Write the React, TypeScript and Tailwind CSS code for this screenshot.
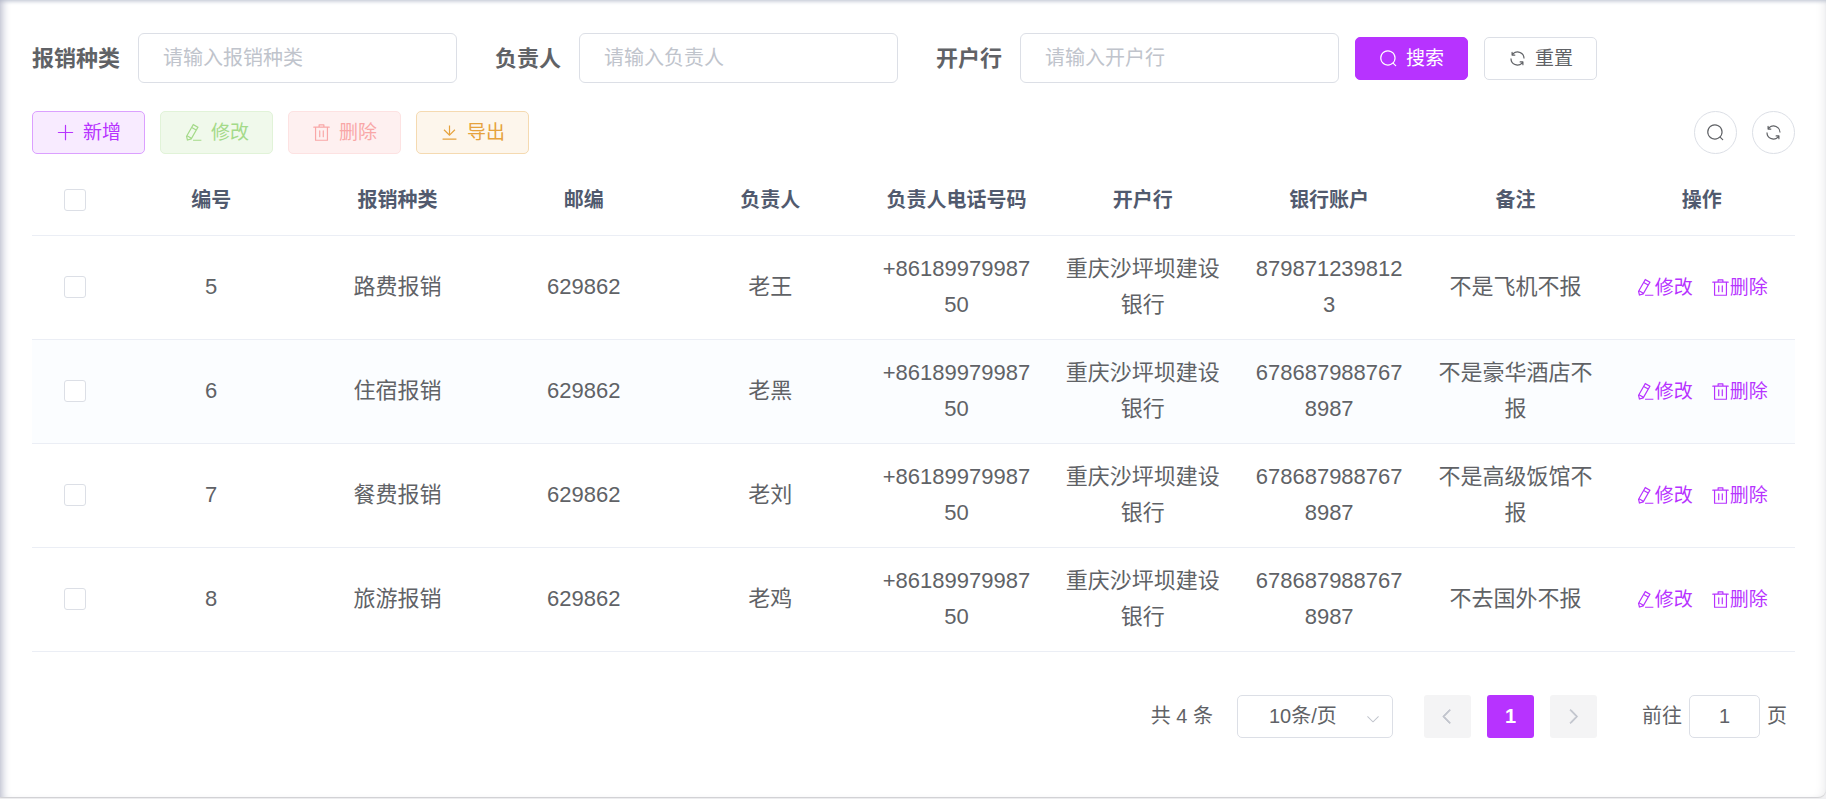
import { useState } from "react";
import type { ReactNode } from "react";

const icons = {
  search:
    "M795.904 750.72l124.992 124.928a32 32 0 0 1-45.248 45.248L750.656 795.904a416 416 0 1 1 45.248-45.248zM480 832a352 352 0 1 0 0-704 352 352 0 0 0 0 704z",
  refresh:
    "M771.776 794.88A384 384 0 0 1 128 512h64a320 320 0 0 0 555.712 216.448H654.72a32 32 0 1 1 0-64h149.056a32 32 0 0 1 32 32v148.928a32 32 0 1 1-64 0v-50.56zM276.288 295.616h92.992a32 32 0 0 1 0 64H220.16a32 32 0 0 1-32-32V178.56a32 32 0 0 1 64 0v50.56A384 384 0 0 1 896.128 512h-64a320 320 0 0 0-555.776-216.384z",
  plus: "M480 480V128a32 32 0 0 1 64 0v352h352a32 32 0 1 1 0 64H544v352a32 32 0 1 1-64 0V544H128a32 32 0 0 1 0-64h352z",
  edit: "m199.04 672.64 193.984 112 224-387.968-193.92-112-224 388.032zm-23.872 60.16 32.896 148.288 144.896-45.696L175.168 732.8zM455.04 229.248l193.92 112 56.704-98.112-193.984-112-56.64 98.112zM104.32 708.8l384-665.024 304.768 175.936L409.152 884.8h.064l-248.448 78.336L104.32 708.8zm384 254.272v-64h448v64h-448z",
  trash:
    "M160 256H96a32 32 0 0 1 0-64h256V95.936a32 32 0 0 1 32-32h256a32 32 0 0 1 32 32V192h256a32 32 0 1 1 0 64h-64v672a32 32 0 0 1-32 32H192a32 32 0 0 1-32-32V256zm448-64v-64H416v64h192zM224 896h576V256H224v640zm192-128a32 32 0 0 1-32-32V416a32 32 0 0 1 64 0v320a32 32 0 0 1-32 32zm192 0a32 32 0 0 1-32-32V416a32 32 0 0 1 64 0v320a32 32 0 0 1-32 32z",
  download:
    "M160 832h704a32 32 0 1 1 0 64H160a32 32 0 1 1 0-64zm384-253.696 236.288-236.352 45.248 45.248L508.8 704 192 387.2l45.248-45.248L480 584.704V128h64v450.304z",
  left: "M609.408 149.376 277.76 489.6a32 32 0 0 0 0 44.672l331.648 340.352a29.12 29.12 0 0 0 41.728 0 30.592 30.592 0 0 0 0-42.752L339.264 511.936l311.872-319.872a30.592 30.592 0 0 0 0-42.688 29.12 29.12 0 0 0-41.728 0z",
  right:
    "M340.864 149.312a30.592 30.592 0 0 0 0 42.752L652.736 512 340.864 831.872a30.592 30.592 0 0 0 0 42.752 29.12 29.12 0 0 0 41.728 0L714.24 534.336a32 32 0 0 0 0-44.672L382.592 149.376a29.12 29.12 0 0 0-41.728 0z",
  down: "M831.872 340.864 512 652.672 192.128 340.864a30.592 30.592 0 0 0-42.752 0 29.12 29.12 0 0 0 0 41.6L489.664 714.24a32 32 0 0 0 44.672 0l340.288-331.712a29.12 29.12 0 0 0 0-41.728 30.592 30.592 0 0 0-42.752 0z",
};

type IconName = keyof typeof icons;

const fields = [
  { id: "type", label: "报销种类", placeholder: "请输入报销种类" },
  { id: "owner", label: "负责人", placeholder: "请输入负责人" },
  { id: "bank", label: "开户行", placeholder: "请输入开户行" },
];

const columns = ["编号", "报销种类", "邮编", "负责人", "负责人电话号码", "开户行", "银行账户", "备注", "操作"];

const rows = [
  { id: 5, type: "路费报销", zip: "629862", owner: "老王", phone: "+8618997998750", bank: "重庆沙坪坝建设银行", account: "8798712398123", note: "不是飞机不报" },
  { id: 6, type: "住宿报销", zip: "629862", owner: "老黑", phone: "+8618997998750", bank: "重庆沙坪坝建设银行", account: "6786879887678987", note: "不是豪华酒店不报" },
  { id: 7, type: "餐费报销", zip: "629862", owner: "老刘", phone: "+8618997998750", bank: "重庆沙坪坝建设银行", account: "6786879887678987", note: "不是高级饭馆不报" },
  { id: 8, type: "旅游报销", zip: "629862", owner: "老鸡", phone: "+8618997998750", bank: "重庆沙坪坝建设银行", account: "6786879887678987", note: "不去国外不报" },
];

function Icon({ name, className = "size-[19px]" }: { name: IconName; className?: string }) {
  return (
    <svg viewBox="0 0 1024 1024" fill="currentColor" className={`shrink-0 ${className}`} aria-hidden="true">
      <path d={icons[name]} />
    </svg>
  );
}

function Button({
  icon,
  tone,
  disabled,
  children,
}: {
  icon: IconName;
  tone: string;
  disabled?: boolean;
  children: ReactNode;
}) {
  return (
    <button
      type="button"
      disabled={disabled}
      className={`flex h-[43px] w-[113px] shrink-0 items-center justify-center gap-2 rounded-[5px] border text-[19px] leading-none ${tone}`}
    >
      <Icon name={icon} />
      <span>{children}</span>
    </button>
  );
}

function RoundButton({ icon, label }: { icon: IconName; label: string }) {
  return (
    <button
      type="button"
      aria-label={label}
      className="flex size-[43px] items-center justify-center rounded-full border border-[#dcdfe6] bg-white"
    >
      <Icon name={icon} />
    </button>
  );
}

function Checkbox({ label }: { label: string }) {
  return (
    <input
      type="checkbox"
      aria-label={label}
      className="block size-[22px] mx-auto appearance-none rounded-[3px] border border-[#dcdfe6] bg-white checked:border-[#b733ff] checked:bg-[#b733ff]"
    />
  );
}

function RowAction({ icon, children }: { icon: IconName; children: ReactNode }) {
  return (
    <button type="button" className="flex items-center text-[19px] leading-none text-[#b733ff]">
      <Icon name={icon} />
      <span>{children}</span>
    </button>
  );
}

function PageArrow({ icon, label }: { icon: IconName; label: string }) {
  return (
    <button
      type="button"
      disabled
      aria-label={label}
      className="flex h-[43px] w-[47px] items-center justify-center rounded-[3px] bg-[#f4f4f5] text-[#c0c4cc]"
    >
      <Icon name={icon} className="size-[19px] stroke-current stroke-[50]" />
    </button>
  );
}

function Pagination() {
  const [page, setPage] = useState("1");

  return (
    <nav className="mt-[43px] flex items-center justify-end pr-2 text-[20px]" aria-label="分页">
      <span>共 4 条</span>
      <div className="relative ml-6">
        <select
          aria-label="每页条数"
          className="block h-[43px] w-[156px] appearance-none rounded-[5px] border border-[#dcdfe6] bg-white pl-[31px]"
        >
          <option>10条/页</option>
          <option>20条/页</option>
          <option>50条/页</option>
        </select>
        <Icon name="down" className="pointer-events-none absolute top-4 right-3 size-4 text-[#c0c4cc]" />
      </div>
      <div className="ml-[31px] flex gap-4">
        <PageArrow icon="left" label="上一页" />
        <button type="button" aria-current="page" className="h-[43px] w-[47px] rounded-[3px] bg-[#b733ff] font-bold text-white">
          1
        </button>
        <PageArrow icon="right" label="下一页" />
      </div>
      <label className="ml-[45px] flex items-center gap-[7px]">
        前往
        <input
          value={page}
          onChange={(e) => setPage(e.target.value)}
          className="h-[43px] w-[71px] rounded-[5px] border border-[#dcdfe6] text-center"
        />
        页
      </label>
    </nav>
  );
}

export default function App() {
  const [activeId, setActiveId] = useState(6);

  return (
    <div className="flex min-h-screen flex-col bg-[#f0f0f2] font-['Liberation_Sans','Noto_Sans_CJK_SC',sans-serif] text-[#606266]">
      <main className="mb-0.5 grow rounded-br-lg bg-white pt-[33px] pr-[31px] pb-14 pl-8 shadow-[inset_8px_0_8px_-6px_#b4b7c8,inset_0_4px_4px_-3px_#b9c0d0,inset_-12px_0_12px_-12px_#e4e4e6,0_1px_1px_#cfcfd2]">
        <form className="flex flex-wrap items-center gap-4" onSubmit={(e) => e.preventDefault()}>
          <div className="flex flex-wrap gap-[38px]">
            {fields.map((field) => (
              <div key={field.id} className="flex items-center gap-[18px]">
                <label htmlFor={field.id} className="text-[22px] font-bold">
                  {field.label}
                </label>
                <input
                  id={field.id}
                  placeholder={field.placeholder}
                  className="h-[50px] w-[319px] rounded-md border border-[#dcdfe6] px-6 text-[20px] outline-none placeholder:text-[#c0c4cc]"
                />
              </div>
            ))}
          </div>
          <Button icon="search" tone="border-[#b733ff] bg-[#b733ff] text-white">
            搜索
          </Button>
          <Button icon="refresh" tone="border-[#dcdfe6] bg-white">
            重置
          </Button>
        </form>

        <div className="mt-7 flex justify-between">
          <div className="flex gap-[15px]">
            <Button icon="plus" tone="border-[#dba0ff] bg-[#f8ebff] text-[#b733ff]">
              新增
            </Button>
            <Button icon="edit" disabled tone="border-[#e1f3d8] bg-[#f0f9eb] text-[#a4da89]">
              修改
            </Button>
            <Button icon="trash" disabled tone="border-[#fde2e2] bg-[#fef0f0] text-[#f9a7a7]">
              删除
            </Button>
            <Button icon="download" tone="border-[#f5dab1] bg-[#fdf6ec] text-[#e6a23c]">
              导出
            </Button>
          </div>
          <div className="flex gap-[15px]">
            <RoundButton icon="search" label="显示搜索" />
            <RoundButton icon="refresh" label="刷新" />
          </div>
        </div>

        <table className="mt-[11px] w-full table-fixed text-center text-[22px] leading-9">
          <thead>
            <tr className="h-[70px] border-b border-[#ebeef5] text-[20px] text-[#515a6e]">
              <th className="w-[86px]">
                <Checkbox label="全选" />
              </th>
              {columns.map((name) => (
                <th key={name}>{name}</th>
              ))}
            </tr>
          </thead>
          <tbody>
            {rows.map((row) => (
              <tr
                key={row.id}
                onMouseEnter={() => setActiveId(row.id)}
                className={`h-[104px] border-b border-[#ebeef5] ${row.id === activeId ? "bg-[#fbfdff]" : ""}`}
              >
                <td>
                  <Checkbox label={`选择 ${row.id}`} />
                </td>
                <td className="px-[15px]">{row.id}</td>
                <td className="px-[15px]">{row.type}</td>
                <td className="px-[15px]">{row.zip}</td>
                <td className="px-[15px]">{row.owner}</td>
                <td className="px-[15px] break-all">{row.phone}</td>
                <td className="px-[15px] break-all">{row.bank}</td>
                <td className="px-[15px] break-all">{row.account}</td>
                <td className="px-[15px] break-all">{row.note}</td>
                <td>
                  <div className="flex justify-center gap-[18px]">
                    <RowAction icon="edit">修改</RowAction>
                    <RowAction icon="trash">删除</RowAction>
                  </div>
                </td>
              </tr>
            ))}
          </tbody>
        </table>

        <Pagination />
      </main>
    </div>
  );
}
